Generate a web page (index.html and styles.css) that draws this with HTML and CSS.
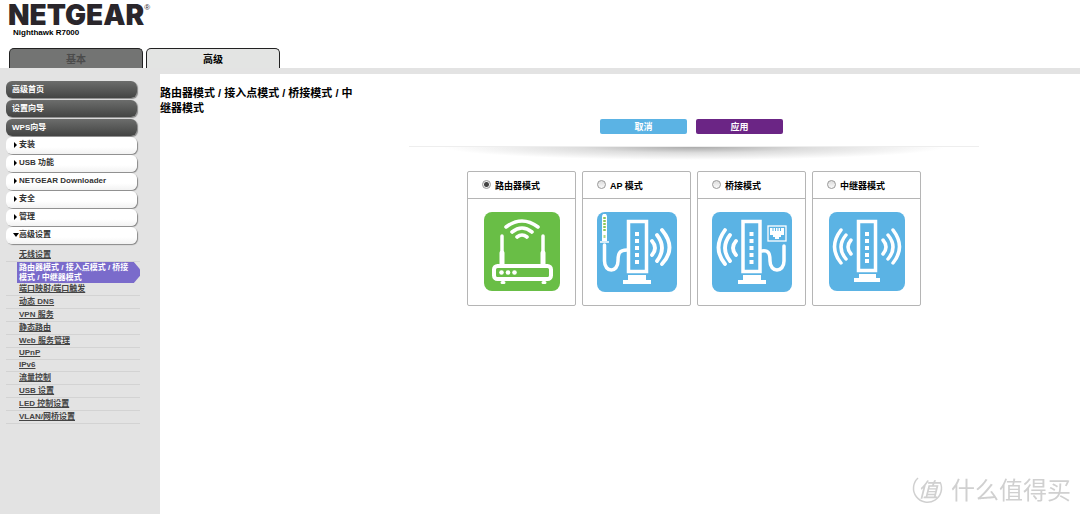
FILE: index.html
```html
<!DOCTYPE html>
<html lang="zh-CN">
<head>
<meta charset="utf-8">
<title>NETGEAR Router R7000</title>
<link rel="stylesheet" href="styles.css">
</head>
<body>
<header class="header">
  <div class="brand"><span class="logo">NETGEAR</span><span class="reg">®</span></div>
  <div class="model">Nighthawk R7000</div>
  <div class="tabs">
    <button class="tab" type="button">基本</button>
    <button class="tab tab-active" type="button">高级</button>
  </div>
</header>
<div class="body">
  <nav class="sidebar">
    <div class="group">
      <button class="item dark" type="button">高级首页</button>
      <button class="item dark" type="button">设置向导</button>
      <button class="item dark" type="button">WPS向导</button>
    </div>
    <div class="group">
      <button class="item light" type="button"><i class="arrow"></i>安装</button>
      <button class="item light" type="button"><i class="arrow"></i>USB 功能</button>
      <button class="item light" type="button"><i class="arrow"></i>NETGEAR Downloader</button>
      <button class="item light" type="button"><i class="arrow"></i>安全</button>
      <button class="item light" type="button"><i class="arrow"></i>管理</button>
      <button class="item light" type="button"><i class="arrow open"></i>高级设置</button>
    </div>
    <ul class="sub">
      <li class="first"><a href="#">无线设置</a></li>
      <li class="current"><a href="#">路由器模式 / 接入点模式 / 桥接模式 / 中继器模式</a></li>
      <li><a href="#">端口映射/端口触发</a></li>
      <li><a href="#">动态 DNS</a></li>
      <li><a href="#">VPN 服务</a></li>
      <li><a href="#">静态路由</a></li>
      <li><a href="#">Web 服务管理</a></li>
      <li class="latin"><a href="#">UPnP</a></li>
      <li class="latin"><a href="#">IPv6</a></li>
      <li><a href="#">流量控制</a></li>
      <li><a href="#">USB 设置</a></li>
      <li><a href="#">LED 控制设置</a></li>
      <li><a href="#">VLAN/网桥设置</a></li>
    </ul>
  </nav>
  <main class="main">
    <h1 class="title">路由器模式 / 接入点模式 / 桥接模式 / 中继器模式</h1>
    <form class="form">
      <div class="actions">
        <button class="btn cancel" type="button">取消</button>
        <button class="btn apply" type="button">应用</button>
      </div>
      <div class="divider"></div>
      <div class="cards">
        <section class="card">
          <label class="choice"><input type="radio" name="mode" checked>路由器模式</label>
          <div class="art">
            <svg class="small" viewBox="0 0 76 79">
              <rect width="76" height="79" rx="8" fill="#69be46"/>
              <g fill="none" stroke="#fff" stroke-linecap="round">
                <path d="M22 15Q38 3 54 15M28 20Q38 12 48 20M33 25Q38 21 43 25" stroke-width="3.6"/>
                <path d="M18 24V40M59 24V40" stroke-width="3.500"/>
                <path d="M18 41V53M59 41V53" stroke-width="5"/>
                <rect x="10" y="54" width="57" height="13" rx="3.500" stroke-width="4"/>
                <path d="M18 70.500H20M59 70.500H61" stroke-width="3"/>
              </g>
              <g fill="#fff"><circle cx="17.500" cy="60.500" r="2.300"/><circle cx="24" cy="60.500" r="2.300"/><circle cx="30.500" cy="60.500" r="2.300"/></g>
            </svg>
          </div>
        </section>
        <section class="card">
          <label class="choice"><input type="radio" name="mode">AP 模式</label>
          <div class="art">
            <svg viewBox="0 0 80 80">
              <rect width="80" height="80" rx="8" fill="#5bb3e4"/>
              <path d="M6 2h3l1 2v25H5V4z" fill="#fff"/>
              <path d="M7.500 5V19" stroke="#8cc65b" stroke-width="2.500" stroke-dasharray="2 1"/>
              <path d="M7.500 23v3" stroke="#aed789" stroke-width="2"/>
              <path d="M3 30H12" stroke="#fff" stroke-width="1.500"/>
              <path d="M7.500 33V49C7.500 61 21 61 21 49C21 42 22 38 30 38" fill="none" stroke="#fff" stroke-width="3.500" stroke-linecap="round"/>
              <rect x="31.500" y="9.500" width="18" height="50" fill="none" stroke="#fff" stroke-width="3.500"/>
              <path d="M38 20h4v4h-4zM38 27h4v4h-4zM38 34h4v4h-4zM38 41h4v4h-4zM38 48h4v4h-4zM31 63H49V68H54V72H26V68H31z" fill="#fff"/>
              <path d="M55 29Q61 36 55 43M60 23Q70 36 60 49M65 18Q80 36 65 52" fill="none" stroke="#fff" stroke-width="3.800" stroke-linecap="round"/>
            </svg>
          </div>
        </section>
        <section class="card">
          <label class="choice"><input type="radio" name="mode">桥接模式</label>
          <div class="art">
            <svg viewBox="0 0 80 80">
              <rect width="80" height="80" rx="8" fill="#5bb3e4"/>
              <path d="M24 29Q18 36 24 43M18 23Q8 36 18 49M13 18Q0 36 13 52" fill="none" stroke="#fff" stroke-width="3.800" stroke-linecap="round"/>
              <rect x="31" y="9.500" width="17" height="50" fill="none" stroke="#fff" stroke-width="3.500"/>
              <path d="M37.500 20h4v4h-4zM37.500 27h4v4h-4zM37.500 34h4v4h-4zM37.500 41h4v4h-4zM37.500 48h4v4h-4zM31 63H49V68H54V72H26V68H31z" fill="#fff"/>
              <path d="M50 39C57 38 58 42 58 49C58 61 72 61 72 49V34" fill="none" stroke="#fff" stroke-width="3.500" stroke-linecap="round"/>
              <rect x="56" y="14" width="18" height="15" fill="none" stroke="#fff" stroke-width="1.300"/>
              <path d="M58 16H72V23H69V25H67V27H63V25H61V23H58z" fill="#fff"/>
              <path d="M61 16V19M63.500 16V19M66 16V19M68.500 16V19" stroke="#5bb3e4" stroke-width="1"/>
            </svg>
          </div>
        </section>
        <section class="card">
          <label class="choice"><input type="radio" name="mode">中继器模式</label>
          <div class="art">
            <svg class="small" viewBox="0 0 76 79">
              <rect width="76" height="79" rx="8" fill="#5bb3e4"/>
              <path d="M22 28Q16 35 22 42M17 23Q7 35 17 47M12 18Q-1 35 12 51M54 28Q60 35 54 42M59 23Q69 35 59 47M64 18Q77 35 64 51" fill="none" stroke="#fff" stroke-width="3.500" stroke-linecap="round"/>
              <rect x="29.500" y="9.500" width="17" height="49" fill="none" stroke="#fff" stroke-width="3.500"/>
              <path d="M36 20h4v4h-4zM36 27h4v4h-4zM36 34h4v4h-4zM36 41h4v4h-4zM36 47h4v4h-4zM30 62H47V66H51V70H25V66H30z" fill="#fff"/>
            </svg>
          </div>
        </section>
      </div>
    </form>
  </main>
</div>
<div class="watermark">
  <span class="seal"><svg viewBox="0 0 32 32"><path d="M6 5A14 14 0 1 0 28 9" fill="none" stroke="#d0d0d0" stroke-width="1.500"/></svg><b class="char">值</b></span>
  <span>什么值得买</span>
</div>
</body>
</html>
```
FILE: styles.css
```css
* { box-sizing: border-box; }
body {
  margin: 0;
  min-height: 100vh;
  display: flex;
  flex-direction: column;
  background: #fff;
  color: #000;
  font-family: "Liberation Sans", "Noto Sans CJK SC", sans-serif;
}
button { font-family: inherit; border: 0; padding: 0; cursor: pointer; }

.header { padding: 1px 8px 0; }
.brand { display: flex; color: #2a262b; }
.logo { font: 900 28px/28px Inter, sans-serif; }
.reg { font-size: 8px; line-height: 14px; }
.model { font-size: 8px; font-weight: bold; line-height: 8px; padding-left: 5px; }
.tabs { display: flex; gap: 3px; padding: 11px 0 0 1px; }
.tab {
  width: 134px;
  height: 20px;
  border: 1px solid #222;
  border-bottom: 0;
  border-radius: 5px 5px 0 0;
  background: #737473;
  color: #4b4b4b;
  font-size: 10px;
  font-weight: bold;
}
.tab-active { background: #e3e4e3; color: #000; }

.body { flex: 1; display: flex; border-top: 6px solid #e3e3e3; }
.sidebar { flex: none; width: 160px; padding: 7px 20px 0 6px; background: #e3e3e3; }
.group { display: flex; flex-direction: column; gap: 2px; margin-bottom: 1px; }
.item {
  height: 17px;
  width: 131px;
  border-radius: 6px;
  text-align: left;
  font-size: 8px;
  line-height: 16px;
}
.group + .group { gap: 1px; }
.dark {
  padding-left: 6px;
  background: linear-gradient(#6c6d6c, #434443);
  box-shadow: 1px 1px 1px #888;
  color: #fff;
  font-weight: bold;
}
.light {
  display: flex;
  align-items: center;
  gap: 2px;
  padding: 0 0 2px 8px;
  background: linear-gradient(#fff 60%, #f2f2f2);
  box-shadow: 1px 1px 1px #888;
  color: #333;
  font-weight: bold;
}
.arrow { border: 3px solid transparent; border-left: 3px solid #000; border-right: 0; }
.open { border: 3px solid transparent; border-top: 4px solid #000; border-bottom: 0; margin-left: -1px; margin-right: -2px; }

.sub { list-style: none; margin: 5px 0 0; padding: 0; font-size: 8px; font-weight: bold; line-height: 12px; }
.sub li { height: 13px; padding-left: 13px; border-bottom: 1px solid #d3d3d3; white-space: nowrap; }
.sub li.latin { height: 12px; line-height: 10px; }
.sub a { color: #444; }
.sub li.current {
  height: auto;
  margin: 0 0 0 11px;
  width: 123px;
  padding: 1px 8px 0 2px;
  border: 0;
  background: #7a6bcb;
  clip-path: polygon(0 0, 95% 0, 100% 35%, 100% 65%, 95% 100%, 0 100%);
  line-height: 10px;
  white-space: normal;
}
.current a { color: #fff; text-decoration: none; }

.main { flex: 1; min-width: 0; }
.title { width: 200px; margin: 12px 0 0; font-size: 11px; line-height: 15px; }
.form { display: flex; flex-direction: column; align-items: center; padding: 3px 0 0 148px; }
.actions { display: flex; gap: 9px; margin-right: 5px; }
.btn { width: 87px; height: 15px; border-radius: 2px; color: #fff; font-size: 9px; font-weight: bold; line-height: 14px; }
.cancel { background: #5bb3e4; }
.apply { background: #6b2585; }
.divider {
  width: 570px;
  height: 14px;
  margin-top: 12px;
  border-top: 1px solid #eee;
  background: radial-gradient(ellipse 44% 100% at 50% 0, #aaa, #ddd 45%, #fff);
}
.cards { display: flex; gap: 6px; margin-top: 11px; }
.card { width: 109px; height: 135px; border: 1px solid #b5b5b5; border-radius: 2px; }
.choice { display: flex; align-items: center; height: 27px; padding: 0 0 0 14px; border-bottom: 1px solid #b5b5b5; font-size: 9px; font-weight: bold; }
.choice input {
  appearance: none;
  width: 9px;
  height: 9px;
  margin: 0 4px 2px 0;
  border: 1px solid #999;
  border-radius: 50%;
  background: linear-gradient(#ddd, #fafafa);
}
.choice input:checked { background: radial-gradient(circle, #444 0 2px, #eee 3px); }
.art { display: flex; justify-content: center; padding-top: 13px; }
.art svg { width: 80px; height: 80px; }
.art svg.small { width: 76px; height: 79px; }

.watermark {
  position: fixed;
  right: 9px;
  bottom: 8px;
  display: flex;
  align-items: center;
  gap: 7px;
  color: #d0d0d0;
  font: 24px/34px "Noto Sans CJK SC", sans-serif;
}
.seal { display: grid; place-items: center; }
.seal > * { grid-area: 1 / 1; }
.seal svg { width: 32px; height: 32px; }
.char { font-size: 20px; font-weight: 500; font-style: italic; line-height: 28px; }
```
